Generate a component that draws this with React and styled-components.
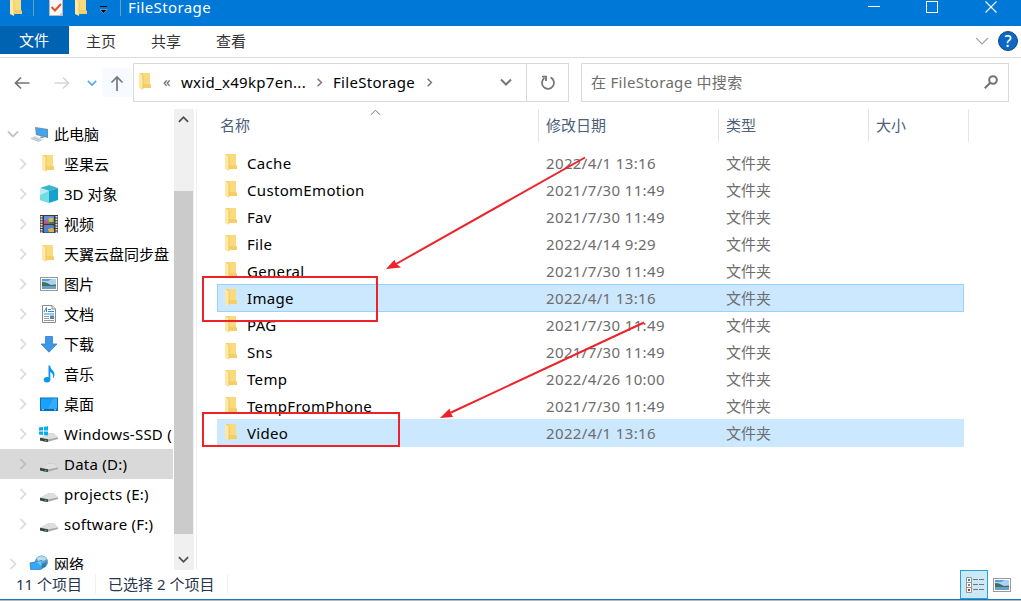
import React from 'react'
import styled, { createGlobalStyle } from 'styled-components'

const navItems = [
    { name: '坚果云', icon: 'folder' },
    { name: '3D 对象', icon: 'cube' },
    { name: '视频', icon: 'video' },
    { name: '天翼云盘同步盘', icon: 'folder' },
    { name: '图片', icon: 'picture' },
    { name: '文档', icon: 'document' },
    { name: '下载', icon: 'download' },
    { name: '音乐', icon: 'music' },
    { name: '桌面', icon: 'desktop' },
    { name: 'Windows-SSD (', icon: 'system', latin: true },
    { name: 'Data (D:)', icon: 'drive', latin: true, active: true },
    { name: 'projects (E:)', icon: 'drive', latin: true },
    { name: 'software (F:)', icon: 'drive', latin: true },
]

const files = [
    { name: 'Cache', date: '2022/4/1 13:16' },
    { name: 'CustomEmotion', date: '2021/7/30 11:49' },
    { name: 'Fav', date: '2021/7/30 11:49' },
    { name: 'File', date: '2022/4/14 9:29' },
    { name: 'General', date: '2021/7/30 11:49' },
    { name: 'Image', date: '2022/4/1 13:16', selected: true, focused: true },
    { name: 'PAG', date: '2021/7/30 11:49' },
    { name: 'Sns', date: '2021/7/30 11:49' },
    { name: 'Temp', date: '2022/4/26 10:00' },
    { name: 'TempFromPhone', date: '2021/7/30 11:49' },
    { name: 'Video', date: '2022/4/1 13:16', selected: true },
]

function FolderIcon() {
    return (
        <svg width="12" height="18" viewBox="0 0 12 18">
            <path d="M1 0H11V11L12 12V15H2Z" fill="#f4cf68" />
            <path d="M4 0H11V11H4Z" fill="#f9da7d" />
            <path d="M0 0L4 2.5V17L0 15Z" fill="#ffe8a3" />
            <path d="M4 2.5V16" stroke="#e6bb55" strokeWidth="0.7" />
        </svg>
    )
}

function PictureIcon() {
    return (
        <svg width="18" height="14" viewBox="0 0 18 14">
            <rect x="0.5" y="0.5" width="17" height="13" fill="#fff" stroke="#999" />
            <rect x="2" y="2" width="14" height="10" fill="#a9d2f4" />
            <path d="M2 2H12L8 4H2Z" fill="#5c9be0" />
            <path d="M2 5L6 5.5L11 8L16 7.5V9.5H2Z" fill="#3f6f61" />
            <path d="M2 9H16V12H2Z" fill="#6aa0c4" />
        </svg>
    )
}

function Drive() {
    return (
        <g>
            <path d="M0 11L8 6.5H14L18 10.5V12L7 15L0 13.5Z" fill="#a9a9a9" />
            <path d="M0 11L8 6.5H14L18 10.5L7 12.5Z" fill="#dedede" />
            <path d="M0 10.7L8 12.3V14.8L7 15L0 13.5Z" fill="#3d4440" />
            <path d="M5 13.4L6.5 13.8" stroke="#43c759" strokeWidth="1.2" />
        </g>
    )
}

function NavIcon({ type }) {
    if (type === 'folder') return <FolderIcon />
    if (type === 'picture') return <PictureIcon />
    return (
        <svg width="18" height="18" viewBox="0 0 18 18">
            {type === 'cube' && (
                <g>
                    <path d="M9 0L18 3L9 6L0 3Z" fill="#3bb5cd" />
                    <path d="M0 3L9 6V18L0 15Z" fill="#b9eff2" />
                    <path d="M18 3L9 6V18L18 15Z" fill="#15a3cb" />
                    <path d="M0 10L9 6V18L0 15Z" fill="#74dbe3" />
                </g>
            )}
            {type === 'video' && (
                <g>
                    <rect width="18" height="18" fill="#3a3a3a" />
                    <path d="M1.5 1V18M16.5 1V18" stroke="#e4e4e4" strokeWidth="2" strokeDasharray="1.6 1" />
                    <rect x="4" y="1" width="10" height="7.5" fill="#5b94df" />
                    <rect x="4" y="10" width="10" height="7.5" fill="#4886dc" />
                    <path d="M4 5L8 6L10 8.5H4ZM4 10H8L5 12Z" fill="#d3566a" />
                    <circle cx="11" cy="4.8" r="2.4" fill="#e3bd28" />
                    <path d="M8 14L12 13L14 15V17H9Z" fill="#e7b72a" />
                    <path d="M10 7H14V8.5H9ZM11 10H14V11.5Z" fill="#457f37" />
                </g>
            )}
            {type === 'document' && (
                <g>
                    <path d="M2.5 0.5H12L15.5 4V17.5H2.5Z" fill="#fff" stroke="#8a8a8a" />
                    <path d="M12 0.5V4H15.5" fill="#e4e4e4" stroke="#8a8a8a" />
                    <path d="M4 7L6.5 2.5V7M8 4.5H11M8 6.5H14M4 9H14" fill="none" stroke="#2c8dd6" />
                    <path d="M4 11.5H9M4 13.5H9M4 15.5H14" stroke="#999" />
                    <rect x="10" y="10.5" width="4" height="3.5" fill="#4c8ab0" />
                </g>
            )}
            {type === 'download' && (
                <path d="M5.5 1.5H12.5V9H17L9 17.2L1 9H5.5Z" fill="#3d96e6" stroke="#2f7fca" strokeWidth="0.8" />
            )}
            {type === 'music' && (
                <g fill="#0a96f5">
                    <ellipse cx="7" cy="14.8" rx="3.3" ry="2.7" />
                    <path d="M8.5 0.5H10.2C10.4 5 14.5 5.2 14.5 9.5C14.5 11.3 13.7 12.5 12.8 13.4C13.6 10 12.5 8 10.3 7V15H8.5Z" />
                </g>
            )}
            {type === 'desktop' && (
                <g>
                    <rect x="0.5" y="3" width="17" height="12.5" fill="#19a2fb" stroke="#0872c2" />
                    <path d="M13 3.5H17V13L8 14Z" fill="#35adfb" />
                    <path d="M1 14.7H17" stroke="#075d9f" />
                    <path d="M2 14.7H4M14 14.7H16" stroke="#fff" strokeWidth="0.7" />
                </g>
            )}
            {type === 'drive' && <g transform="translate(0 2)"><Drive /></g>}
            {type === 'system' && (
                <g>
                    <g transform="translate(0 2)"><Drive /></g>
                    <path d="M-1 2.5L3 2V5.5H-1ZM4 1.8L8 1.2V5.5H4ZM-1 6.5H3V10L-1 9.5ZM4 6.5H8V10.5L4 10.1Z" fill="#00adef" />
                </g>
            )}
            {type === 'computer' && (
                <g>
                    <path d="M5 2L18 4V13L6 10Z" fill="#778b9b" />
                    <path d="M6 3L17 4.8V11.5L7 9.2Z" fill="#3aa8f2" />
                    <path d="M11 11L15 13H10Z" fill="#8e9aa5" />
                    <path d="M0 13.5L5 11L14 14.5L9 17Z" fill="#d5dde5" />
                    <path d="M1 13.5L9 16.5M3 12.5L11 15.5" stroke="#9eabb6" strokeWidth="0.5" />
                </g>
            )}
            {type === 'network' && (
                <g>
                    <circle cx="11.5" cy="7" r="6.5" fill="#5a9fc9" />
                    <path d="M7 3C10 0 15 1 17 4L13 6L12 9L8 7Z" fill="#b9ddeb" />
                    <path d="M12 9L17 7L15 12L12 13Z" fill="#347aa8" />
                    <path d="M0 8L12 5.5V14L1 16Z" fill="#35a7f2" stroke="#3278b2" strokeWidth="0.8" />
                    <path d="M6 7L11.5 6V11Z" fill="#70c6fb" />
                </g>
            )}
        </svg>
    )
}

const chevronPaths = {
    down: 'M1 3.5L6 8.5L11 3.5',
    up: 'M1 8.5L6 3.5L11 8.5',
    right: 'M3.5 1L8.5 6L3.5 11',
}

function Chevron({ dir, size = 12, color = '#666', weight = 1.5 }) {
    return (
        <svg width={size} height={size} viewBox="0 0 12 12">
            <path d={chevronPaths[dir]} fill="none" stroke={color} strokeWidth={weight} />
        </svg>
    )
}

function Arrow({ dir, color }) {
    return (
        <svg width="16" height="16" viewBox="0 0 16 16" fill="none" stroke={color} strokeWidth="1.7">
            {dir === 'left' && <path d="M15.5 8H1.5M7 2.5L1.5 8L7 13.5" />}
            {dir === 'right' && <path d="M0.5 8H14.5M9 2.5L14.5 8L9 13.5" />}
            {dir === 'up' && <path d="M8 16V2M2.5 7.5L8 2L13.5 7.5" />}
        </svg>
    )
}

function App() {
    return (
        <Window>
            <GlobalStyle />
            <TitleBar>
                <QuickAccess>
                    <FolderIcon />
                    <TitleDivider />
                    <svg width="14" height="18" viewBox="0 0 14 18">
                        <path d="M0.5 0H13.5V16.5H0.5Z" fill="#f7f7f7" stroke="#b9b9b9" />
                        <path d="M10 16.5L13.5 13V16.5Z" fill="#c9c9c9" />
                        <path d="M2.5 8L6 11.5L12 5" fill="none" stroke="#e8501c" strokeWidth="2" />
                    </svg>
                    <FolderIcon />
                    <svg width="9" height="8" viewBox="0 0 9 8">
                        <path d="M1 0.5H8" stroke="#000" strokeWidth="1" />
                        <path d="M1 3.5H8L4.5 7.5Z" fill="#000" stroke="#cfe3f5" strokeWidth="0.5" />
                    </svg>
                    <TitleDivider />
                </QuickAccess>
                <Title>FileStorage</Title>
                <WindowControls>
                    <svg width="12" height="12" viewBox="0 0 12 12"><path d="M0 5.5H12" stroke="#fff" /></svg>
                    <svg width="12" height="12" viewBox="0 0 12 12"><rect x="0.5" y="0.5" width="11" height="11" fill="none" stroke="#fff" /></svg>
                    <svg width="12" height="12" viewBox="0 0 12 12"><path d="M0.5 0.5L11.5 11.5M11.5 0.5L0.5 11.5" stroke="#fff" strokeWidth="1.1" /></svg>
                </WindowControls>
            </TitleBar>

            <Ribbon>
                <FileTab>文件</FileTab>
                <Tab>主页</Tab>
                <Tab>共享</Tab>
                <Tab>查看</Tab>
                <RibbonEnd>
                    <Chevron dir="down" size={14} color="#a0a0a0" weight={1.1} />
                    <Help>?</Help>
                </RibbonEnd>
            </Ribbon>

            <AddressRow>
                <NavButtons>
                    <Arrow dir="left" color="#737373" />
                    <Arrow dir="right" color="#d6d6d6" />
                    <Chevron dir="down" size={10} color="#55aaf5" weight={2} />
                    <UpButton><Arrow dir="up" color="#777" /></UpButton>
                </NavButtons>
                <AddressBar>
                    <FolderIcon />
                    <Crumbs>
                        <Ellipsis>«</Ellipsis>
                        <CrumbName $width={134}>wxid_x49kp7en...</CrumbName>
                        <Chevron dir="right" size={9} color="#777" weight={2} />
                        <CrumbName $width={92}>FileStorage</CrumbName>
                        <Chevron dir="right" size={9} color="#777" weight={2} />
                    </Crumbs>
                    <DropButton><Chevron dir="down" size={12} color="#777" weight={2} /></DropButton>
                    <RefreshButton>
                        <svg width="16" height="16" viewBox="0 0 16 16" fill="none" stroke="#777" strokeWidth="1.8">
                            <path d="M10.5 2.4A6 6 0 1 1 4.4 3" />
                            <path d="M2 1.7H6V6" />
                        </svg>
                    </RefreshButton>
                </AddressBar>
                <SearchBox>
                    <span>在 FileStorage 中搜索</span>
                    <svg width="14" height="14" viewBox="0 0 14 14" fill="none" stroke="#737373" strokeWidth="2">
                        <circle cx="9" cy="5" r="3.8" />
                        <path d="M6.3 7.7L0.8 13.2" />
                    </svg>
                </SearchBox>
            </AddressRow>

            <Body>
                <Sidebar>
                    <Tree>
                        <TreeRow $level={0}>
                            <Twisty><Chevron dir="down" size={12} color="#c4c4c4" weight={1.8} /></Twisty>
                            <IconSlot><NavIcon type="computer" /></IconSlot>
                            <span>此电脑</span>
                        </TreeRow>
                        {navItems.map((item) => (
                            <TreeRow key={item.name} $level={1} $active={item.active} $latin={item.latin}>
                                <Twisty><Chevron dir="right" size={12} color={item.active ? '#bebebe' : '#dedede'} weight={1.8} /></Twisty>
                                <IconSlot $narrow={item.icon === 'folder'}><NavIcon type={item.icon} /></IconSlot>
                                <span>{item.name}</span>
                            </TreeRow>
                        ))}
                        <NetworkRow $level={0}>
                            <Twisty><Chevron dir="right" size={12} color="#dedede" weight={1.8} /></Twisty>
                            <IconSlot><NavIcon type="network" /></IconSlot>
                            <span>网络</span>
                        </NetworkRow>
                    </Tree>
                    <ScrollBar>
                        <ScrollButton><Chevron dir="up" size={11} color="#505050" weight={2} /></ScrollButton>
                        <ScrollThumb />
                        <ScrollButton><Chevron dir="down" size={11} color="#505050" weight={2} /></ScrollButton>
                    </ScrollBar>
                </Sidebar>

                <Main>
                    <ListHeader>
                        <HeaderCell>
                            名称
                            <SortMark><Chevron dir="up" size={11} color="#666" weight={1} /></SortMark>
                        </HeaderCell>
                        <HeaderCell>修改日期</HeaderCell>
                        <HeaderCell>类型</HeaderCell>
                        <HeaderCell>大小</HeaderCell>
                    </ListHeader>
                    <FileList>
                        {files.map((file) => (
                            <FileRow key={file.name} $selected={file.selected} $focused={file.focused}>
                                <FileName><FolderIcon />{file.name}</FileName>
                                <FileDate>{file.date}</FileDate>
                                <FileInfo>文件夹</FileInfo>
                            </FileRow>
                        ))}
                    </FileList>
                </Main>
            </Body>

            <StatusBar>
                <StatusItem $width={92}>11 个项目</StatusItem>
                <StatusItem $width={132}>已选择 2 个项目</StatusItem>
                <ViewModes>
                    <DetailsButton>
                        <svg width="18" height="16" viewBox="0 0 18 16">
                            <path d="M0.5 0.5H5.5V15.5H0.5ZM0.5 5.5H5.5M0.5 10.5H5.5" fill="#fff" stroke="#949494" />
                            <path d="M2 3H4" stroke="#3a7fb0" strokeWidth="2" />
                            <path d="M2 8H4" stroke="#8a8446" strokeWidth="2" />
                            <path d="M2 13H4" stroke="#c4321c" strokeWidth="2" />
                            <path d="M7 2.5H12M13 2.5H18M7 7.5H12M13 7.5H18M7 12.5H12M13 12.5H18" stroke="#757575" />
                        </svg>
                    </DetailsButton>
                    <PictureIcon />
                </ViewModes>
            </StatusBar>

            <Frame $top={276} $width={176} $height={46} />
            <Frame $top={412} $width={198} $height={35} />
            <Markup width="1021" height="601" viewBox="0 0 1021 601">
                <path d="M585 157.5L396 264M644 322.5L450 413" stroke="#ee2229" strokeWidth="2" />
                <path d="M386 269L394.5 259.8L396 263.5L401 267.5Z" fill="#ee2229" />
                <path d="M440 418L449.5 408.5L450.5 412.6L453 417Z" fill="#ee2229" />
            </Markup>
        </Window>
    )
}

export default App

const GlobalStyle = createGlobalStyle`
*{
    box-sizing:border-box;
}
body{
    margin:0;
    overflow:hidden;
}
svg{
    display:block;
    flex-shrink:0;
    overflow:visible;
}
`;

const Window = styled.div`
position:relative;
width:1021px;
height:601px;
display:flex;
flex-direction:column;
overflow:hidden;
background:#fff;
color:#000;
font-family:"Noto Sans", "Noto Sans CJK SC", sans-serif;
font-size:15px;
line-height:20px;
white-space:nowrap;
`;

const TitleBar = styled.div`
height:26px;
display:flex;
align-items:flex-start;
background:#0078d7;
color:#fff;
`;

const QuickAccess = styled.div`
display:flex;
height:16px;
width:128px;
padding-left:10px;
align-items:center;

svg:nth-of-type(2){
    margin-left:15px;
}
svg:nth-of-type(3){
    margin-left:12px;
}
svg:nth-of-type(4){
    margin:3px 12px 0 12px;
}
`;

const TitleDivider = styled.div`
width:1px;
height:16px;
background:#6d9cc6;

svg + &{
    margin-left:11px;
}
svg:nth-of-type(4) + &{
    margin-left:0;
}
`;

const Title = styled.div`
height:20px;
margin-top:-3px;
letter-spacing:0.4px;
`;

const WindowControls = styled.div`
display:flex;
gap:46px;
margin:1px 24px 0 auto;

svg:last-child{
    margin-left:1px;
}
`;

const Ribbon = styled.div`
height:32px;
display:flex;
border-bottom:1px solid #dadbdc;
color:#333;
`;

const FileTab = styled.div`
width:69px;
height:28px;
padding-right:1px;
line-height:29px;
text-align:center;
background:#0063b1;
color:#fff;
`;

const Tab = styled.div`
width:65px;
height:30px;
padding-right:1px;
line-height:30px;
text-align:center;
`;

const RibbonEnd = styled.div`
display:flex;
align-items:center;
gap:9px;
height:30px;
margin-left:auto;
padding-right:3px;
`;

const Help = styled.div`
width:20px;
height:20px;
border:1px solid #124b7c;
border-radius:50%;
background:#0b68c4;
color:#fff;
font-size:16px;
font-weight:500;
line-height:18px;
text-align:center;
`;

const AddressRow = styled.div`
height:51px;
display:flex;
padding:5px 12px 7px 14px;
`;

const NavButtons = styled.div`
width:119px;
display:flex;
align-items:center;

svg:nth-of-type(2){
    margin-left:24px;
}
svg:nth-of-type(3){
    margin-left:17px;
}
`;

const UpButton = styled.div`
width:30px;
height:29px;
margin-left:5px;
display:flex;
align-items:center;
justify-content:center;
background:#f7fbff;
`;

const AddressBar = styled.div`
width:436px;
display:flex;
align-items:center;
border:1px solid #d9d9d9;
padding:0 0 1px 5px;
`;

const Crumbs = styled.div`
flex:1;
display:flex;
align-items:center;
`;

const Ellipsis = styled.span`
width:30px;
padding:0 0 3px 12px;
color:#666;
`;

const CrumbName = styled.span`
width:${(props) => props.$width}px;
letter-spacing:0.3px;
padding-bottom:1px;

svg + &{
    margin-left:9px;
}
`;

const DropButton = styled.div`
width:40px;
display:flex;
justify-content:center;
`;

const RefreshButton = styled.div`
width:42px;
height:calc(100% + 1px);
margin-bottom:-1px;
display:flex;
align-items:center;
justify-content:center;
border-left:1px solid #d9d9d9;
`;

const SearchBox = styled.div`
flex:1;
display:flex;
align-items:center;
justify-content:space-between;
margin-left:12px;
padding:0 10px 1px 9px;
border:1px solid #d9d9d9;
color:#6d6d6d;
letter-spacing:0.29px;

span{
    padding-bottom:1px;
}
`;

const Body = styled.div`
height:461px;
display:flex;
`;

const Sidebar = styled.div`
width:197px;
display:flex;
border-right:1px solid #f0f0f0;
`;

const Tree = styled.div`
width:174px;
padding-top:10px;
overflow:hidden;
`;

const TreeRow = styled.div`
height:30px;
width:173px;
overflow:hidden;
display:flex;
align-items:center;
padding-left:${(props) => (props.$level ? 17 : 7)}px;
letter-spacing:${(props) => (props.$latin ? '0.25px' : 'normal')};
background:${(props) => (props.$active ? '#d9d9d9' : 'transparent')};
`;

const NetworkRow = styled(TreeRow)`
margin-top:10px;
`;

const Twisty = styled.div`
width:12px;
flex-shrink:0;
`;

const IconSlot = styled.div`
width:18px;
margin:0 6px 0 11px;
padding-right:${(props) => (props.$narrow ? 2 : 0)}px;
display:flex;
flex-shrink:0;
justify-content:center;
`;

const ScrollBar = styled.div`
width:20px;
display:flex;
flex-direction:column;
background:#f0f0f0;
justify-content:flex-end;

> :first-child{
    margin-bottom:auto;
}
`;

const ScrollButton = styled.div`
width:19px;
height:21px;
display:flex;
align-items:center;
justify-content:center;
`;

const ScrollThumb = styled.div`
width:19px;
height:343px;
margin-bottom:15px;
background:#cbcbcb;
`;

const Main = styled.div`
flex:1;
`;

const ListHeader = styled.div`
height:32px;
display:grid;
grid-template-columns:342px 180px 150px 100px;
color:#4c607a;
`;

const HeaderCell = styled.div`
position:relative;
padding-left:7px;
line-height:33px;
border-right:1px solid #e5e5e5;

&:first-child{
    padding-left:23px;
}
`;

const SortMark = styled.span`
position:absolute;
left:173px;
top:-2px;
`;

const FileList = styled.div`
padding:9px 0 0 20px;
`;

/* each row is a pixel taller than the 27px step between rows */
const FileRow = styled.div`
width:747px;
height:28px;
margin-bottom:-1px;
display:grid;
grid-template-columns:329px 180px 1fr;
align-items:center;
background:${(props) => (props.$selected ? '#cce8ff' : 'transparent')};
box-shadow:${(props) => (props.$focused ? 'inset 0 0 0 1px #99d1ff' : 'none')};

&:first-child{
    margin-top:-1px;
}
`;

const FileName = styled.div`
display:flex;
align-items:center;
gap:10px;
padding-left:8px;
letter-spacing:0.32px;
`;

const FileInfo = styled.div`
color:#6d6d6d;
`;

const FileDate = styled(FileInfo)`
letter-spacing:0.36px;
`;

const StatusBar = styled.div`
height:31px;
display:flex;
align-items:flex-start;
padding-left:4px;
border-bottom:1px solid #b9b9b9;
box-shadow:inset 0 -1px 0 #1577c4;
color:#26364f;
`;

const StatusItem = styled.div`
width:${(props) => props.$width}px;
height:20px;
margin-top:4px;
padding-left:12px;
border-right:1px solid #f0f0f0;
`;

const ViewModes = styled.div`
display:flex;
align-items:center;
gap:5px;
margin:0 10px 0 auto;
`;

const DetailsButton = styled.div`
width:28px;
height:29px;
display:flex;
align-items:center;
justify-content:center;
padding-left:2px;
border:1px solid #26a0da;
background:#cbe8f6;
`;

/* red marks drawn over the window */
const Frame = styled.div`
position:absolute;
left:202px;
top:${(props) => props.$top}px;
width:${(props) => props.$width}px;
height:${(props) => props.$height}px;
border:2px solid #ee2229;
`;

const Markup = styled.svg`
position:absolute;
left:0;
top:0;
`;
